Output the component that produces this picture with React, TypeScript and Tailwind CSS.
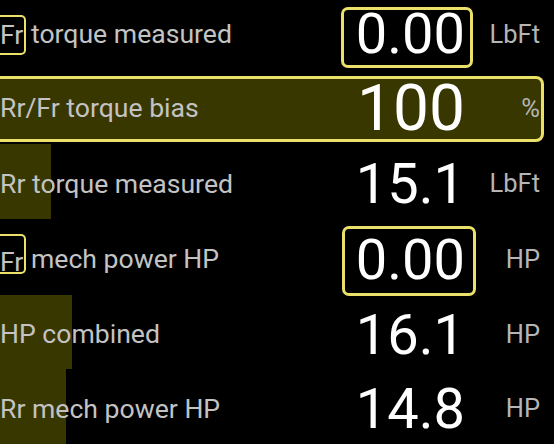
import React from "react";

const FILL = "#393700";

type RowProps = {
  label: React.ReactNode;
  value: string;
  unit: string;
  bar?: number;
  h: string;
  boxed?: "r1" | "r4";
  pt?: string;
};

function FrBox({ variant }: { variant: "r1" | "r4" }) {
  return (
    <span
      className={
        variant === "r1"
          ? "inline-flex items-center h-[40px] border-2 border-l-0 border-[#ebe16a] rounded-r-[5px] pr-[1px] -mr-[2px] mt-[1px]"
          : "inline-flex items-end h-[40px] border-2 border-l-0 border-[#ebe16a] rounded-r-[5px] pr-[1px] -mr-[2px] pb-[1px] -translate-y-[6px]"
      }
    >
      <span className={variant === "r4" ? "translate-y-[5px]" : ""}>Fr</span>
    </span>
  );
}

function Row({ label, value, unit, bar, h, boxed, pt }: RowProps) {
  return (
    <div
      className={`flex items-center ${h} ${pt ?? ""}`}
      style={
        bar
          ? { background: `linear-gradient(to right, ${FILL} ${bar}px, transparent ${bar}px)` }
          : undefined
      }
    >
      <div className="flex-1 text-[26.6px] leading-none text-[#c3c3c3] whitespace-nowrap flex items-center">
        {label}
      </div>
      <div className="flex justify-end">
        {boxed === "r1" ? (
          <div className="flex items-center h-[61px] mt-[5px] border-[3px] border-[#ebe16a] rounded-[7px] pl-[12px] pr-[5px] -mr-[8px] pb-[6px]">
            <span className="text-[56px] leading-none text-white">{value}</span>
          </div>
        ) : boxed === "r4" ? (
          <div className="flex items-center h-[70px] border-[3px] border-[#ebe16a] rounded-[7px] pl-[11px] pr-[8px] -mr-[11px] pb-[2px] mt-[2px]">
            <span className="text-[56px] leading-none text-white">{value}</span>
          </div>
        ) : (
          <span className="text-[56px] leading-none text-white">{value}</span>
        )}
      </div>
      <div className="w-[89px] pr-[14px] text-right text-[25.5px] leading-none text-[#b5b5b5]">{unit}</div>
    </div>
  );
}

export default function App() {
  return (
    <div className="w-[554px] h-[444px] bg-black overflow-hidden font-['Roboto',sans-serif]">
      <Row
        h="h-[69px]"
        boxed="r1"
        label={
          <>
            <FrBox variant="r1" />
            <span className="whitespace-pre"> torque measured</span>
          </>
        }
        value="0.00"
        unit="LbFt"
      />
      <div className="h-[75px] pt-[4px] pr-[10px] flex items-center">
        <div
          className="flex-1 h-[66px] flex items-center border-y-[3px] border-r-[3px] border-[#ebe16a] rounded-r-[8px]"
          style={{ background: FILL }}
        >
          <div className="flex-1 text-[26.6px] leading-none text-[#c3c3c3] whitespace-nowrap">Rr/Fr torque bias</div>
          <span className="text-[64px] leading-none text-white">100</span>
          <div className="w-[76px] pr-[1px] text-right text-[25.5px] leading-none text-[#b5b5b5]">%</div>
        </div>
      </div>
      <Row h="h-[75px]" pt="pt-[5px]" bar={51} label="Rr torque measured" value="15.1" unit="LbFt" />
      <Row
        h="h-[76px]"
        pt="pt-[5px]"
        boxed="r4"
        label={
          <>
            <FrBox variant="r4" />
            <span className="whitespace-pre"> mech power HP</span>
          </>
        }
        value="0.00"
        unit="HP"
      />
      <Row h="h-[74px]" pt="pt-[5px]" bar={72} label="HP combined" value="16.1" unit="HP" />
      <Row h="h-[75px]" pt="pt-[5px]" bar={66} label="Rr mech power HP" value="14.8" unit="HP" />
    </div>
  );
}
